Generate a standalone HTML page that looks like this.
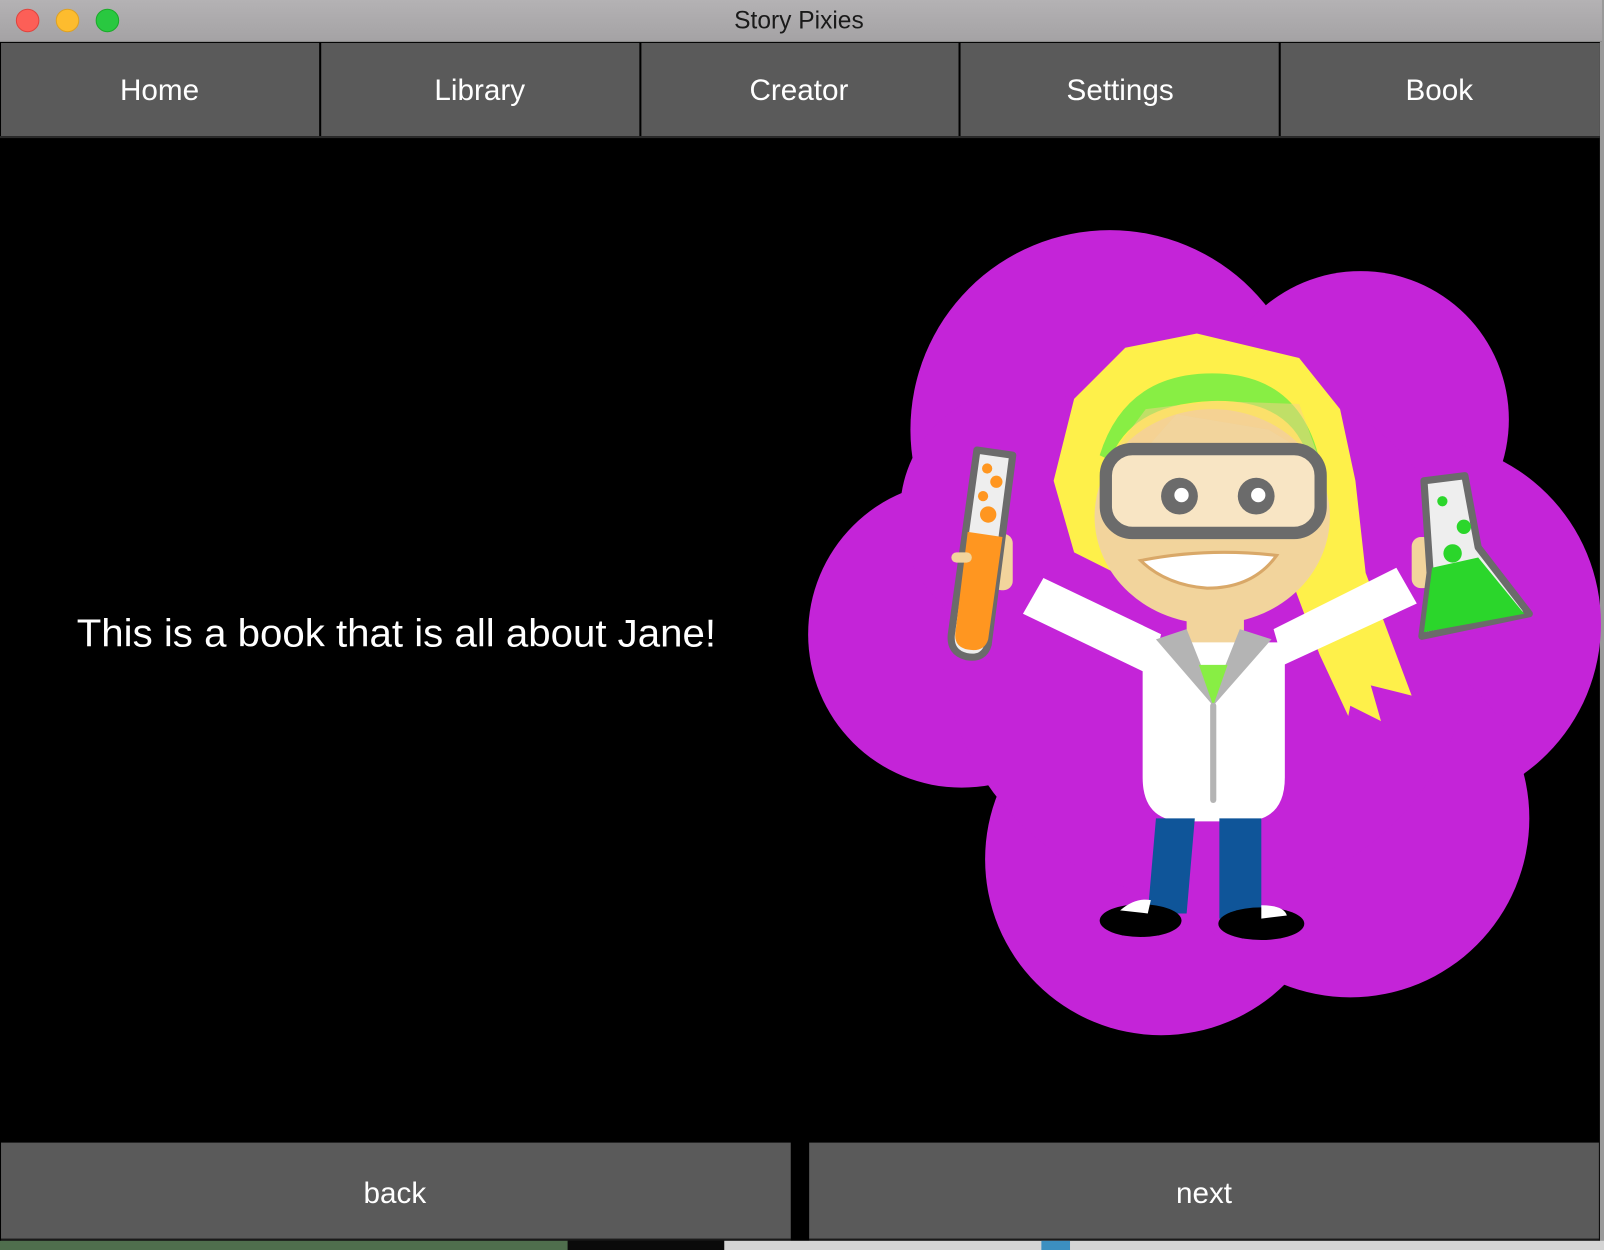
<!DOCTYPE html>
<html><head><meta charset="utf-8"><style>
html,body{margin:0;padding:0;background:#000;width:1604px;height:1250px;overflow:hidden}
svg{display:block}
text{font-family:"Liberation Sans",sans-serif}
</style></head><body>
<svg width="1604" height="1250" viewBox="0 0 1568 1222" preserveAspectRatio="none" xmlns="http://www.w3.org/2000/svg">
<defs>
<linearGradient id="tb" x1="0" y1="0" x2="0" y2="1"><stop offset="0" stop-color="#b4b2b4"/><stop offset="1" stop-color="#a4a2a4"/></linearGradient>
</defs>
<rect width="1568" height="1222" fill="#000"/>
<!-- right strip -->
<rect x="1564" y="0" width="4" height="1222" fill="#9a9a9a"/>
<!-- title bar -->
<rect x="0" y="0" width="1566" height="41" fill="url(#tb)"/>
<rect x="0" y="40" width="1566" height="1" fill="#8a8a8a"/>
<circle cx="27" cy="20" r="11" fill="#fc5f57" stroke="#e0443e" stroke-width="1"/>
<circle cx="66" cy="20" r="11" fill="#fdbc2e" stroke="#dea123" stroke-width="1"/>
<circle cx="105" cy="20" r="11" fill="#29c840" stroke="#1aab29" stroke-width="1"/>
<text x="781" y="28" font-size="24" text-anchor="middle" fill="#1a1a1a">Story Pixies</text>
<!-- nav -->
<g fill="#5a5a5a">
<rect x="1" y="42" width="311" height="91"/>
<rect x="314" y="42" width="311" height="91"/>
<rect x="627" y="42" width="310" height="91"/>
<rect x="939" y="42" width="311" height="91"/>
<rect x="1252" y="42" width="312" height="91"/>
</g>
<rect x="0" y="133" width="1564" height="2" fill="#2a2a2a"/>
<g fill="#fff" font-size="29" text-anchor="middle">
<text x="156" y="98">Home</text>
<text x="469" y="98">Library</text>
<text x="781" y="98">Creator</text>
<text x="1095" y="98">Settings</text>
<text x="1407" y="98">Book</text>
</g>
<!-- text -->
<text x="75" y="632" font-size="38" fill="#fff" textLength="625" lengthAdjust="spacingAndGlyphs">This is a book that is all about Jane!</text>
<!-- cloud -->
<g fill="#c424d8">
<circle cx="1085" cy="420" r="195"/>
<circle cx="1330" cy="410" r="145"/>
<circle cx="940" cy="620" r="150"/>
<circle cx="1385" cy="610" r="180"/>
<circle cx="1135" cy="840" r="172"/>
<circle cx="1320" cy="800" r="175"/>
<circle cx="1180" cy="620" r="260"/>
<circle cx="1000" cy="500" r="120"/>
</g>
<!-- hair back -->
<polygon points="1170,326 1270,350 1310,400 1325,470 1335,560 1365,640 1380,680 1340,670 1350,705 1320,690 1318,700 1290,640 1260,560 1090,560 1050,540 1030,470 1050,390 1100,340" fill="#fef04a"/>
<!-- neck -->
<rect x="1160" y="590" width="56" height="40" fill="#f2d49c"/>
<!-- face -->
<ellipse cx="1185" cy="505" rx="115" ry="105" fill="#f2d49c"/>
<!-- headband -->
<path d="M1075,445 Q1100,365 1185,365 Q1270,365 1290,450 L1278,445 Q1260,390 1185,392 Q1105,395 1085,450 Z" fill="#88ee44"/>
<!-- fringe -->
<polygon points="1090,440 1120,400 1185,392 1270,395 1290,450 1240,420 1150,405 1110,450" fill="#f7d08a" opacity="0.5"/>
<!-- goggles -->
<rect x="1081" y="439" width="210" height="82" rx="26" fill="#f8e5c4" stroke="#6b6b6b" stroke-width="12"/>
<circle cx="1153" cy="485" r="18" fill="#6b6b6b"/><circle cx="1155" cy="484" r="7" fill="#fff"/>
<circle cx="1228" cy="485" r="18" fill="#6b6b6b"/><circle cx="1230" cy="484" r="7" fill="#fff"/>
<!-- smile -->
<path d="M1115,548 Q1180,535 1248,543 Q1225,575 1180,575 Q1140,572 1115,548 Z" fill="#fff" stroke="#d9a868" stroke-width="3"/>
<!-- arms -->
<polygon points="1020,565 1000,600 1125,660 1135,620" fill="#fff"/>
<polygon points="1365,555 1385,590 1255,650 1245,615" fill="#fff"/>
<!-- hands -->
<rect x="970" y="522" width="20" height="55" rx="9" fill="#f2d49c"/>
<rect x="1380" y="525" width="20" height="50" rx="9" fill="#f2d49c"/>
<!-- lab coat -->
<path d="M1117,628 L1256,628 L1256,760 Q1256,803 1215,803 L1158,803 Q1117,803 1117,760 Z" fill="#fff"/>
<polygon points="1130,625 1160,615 1186,680 1212,615 1243,625 1186,690" fill="#b4b4b4"/>
<polygon points="1172,650 1200,650 1186,690" fill="#88ee44"/>
<line x1="1186" y1="690" x2="1186" y2="782" stroke="#b4b4b4" stroke-width="6" stroke-linecap="round"/>
<!-- legs -->
<polygon points="1130,800 1168,800 1160,893 1122,893" fill="#0f5599"/>
<polygon points="1192,800 1233,800 1233,898 1192,898" fill="#0f5599"/>
<ellipse cx="1115" cy="900" rx="40" ry="16" fill="#000"/>
<ellipse cx="1233" cy="903" rx="42" ry="16" fill="#000"/>
<path d="M1095,890 Q1110,877 1125,880 L1122,893 Z" fill="#fff"/>
<path d="M1233,885 Q1255,885 1258,895 L1233,898 Z" fill="#fff"/>
<!-- test tube -->
<path d="M955,440 L990,445 L966,630 Q962,645 945,642 Q928,638 930,620 Z" fill="#eeeeee" stroke="#6b6b6b" stroke-width="7" stroke-linejoin="round"/>
<path d="M946,520 L980,525 L966,625 Q962,638 946,635 Q932,632 934,618 Z" fill="#ff9620"/>
<g fill="#ff9620"><circle cx="965" cy="458" r="5"/><circle cx="974" cy="471" r="6"/><circle cx="961" cy="485" r="5"/><circle cx="966" cy="503" r="8"/></g>
<rect x="930" y="540" width="20" height="10" rx="5" fill="#f2d49c"/>
<!-- flask -->
<path d="M1392,470 L1432,465 L1445,535 L1495,600 L1390,622 L1398,560 Z" fill="#eeeeee" stroke="#6b6b6b" stroke-width="7" stroke-linejoin="round"/>
<path d="M1400,555 L1445,545 L1490,600 L1392,618 Z" fill="#2bd62b"/>
<g fill="#2bd62b"><circle cx="1410" cy="490" r="5"/><circle cx="1431" cy="515" r="7"/><circle cx="1420" cy="541" r="9"/></g>
<!-- bottom buttons -->
<rect x="1" y="1117" width="772" height="94" fill="#5a5a5a"/>
<rect x="791" y="1117" width="772" height="94" fill="#5a5a5a"/>
<rect x="1" y="1211" width="772" height="2" fill="#1a1a1a"/>
<rect x="791" y="1211" width="772" height="2" fill="#1a1a1a"/>
<text x="386" y="1176" font-size="29" fill="#fff" text-anchor="middle">back</text>
<text x="1177" y="1176" font-size="29" fill="#fff" text-anchor="middle">next</text>
<!-- desktop bits below -->
<rect x="0" y="1213" width="555" height="9" fill="#4f6e4d"/>
<rect x="555" y="1213" width="153" height="9" fill="#0a0a0a"/>
<rect x="708" y="1213" width="860" height="9" fill="#d4d4d4"/>
<rect x="1018" y="1213" width="28" height="9" fill="#3c8fc0"/>
</svg>
</body></html>
